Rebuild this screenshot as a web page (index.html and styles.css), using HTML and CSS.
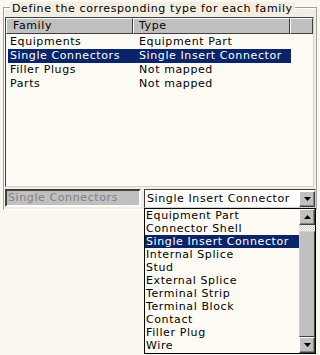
FILE: index.html
```html
<!DOCTYPE html>
<html>
<head>
<meta charset="utf-8">
<link rel="stylesheet" href="styles.css">
</head>
<body>
<div class="page">
  <div class="group">
    <div class="legend">Define the corresponding type for each family</div>
    <div class="listview">
      <div class="header">
        <div class="hcell c1">Family</div>
        <div class="hcell c2">Type</div>
        <div class="hcell c3"></div>
      </div>
      <div class="row"><span class="c1">Equipments</span><span class="c2">Equipment Part</span></div>
      <div class="row sel"><span class="c1">Single Connectors</span><span class="c2">Single Insert Connector</span></div>
      <div class="row"><span class="c1">Filler Plugs</span><span class="c2">Not mapped</span></div>
      <div class="row"><span class="c1">Parts</span><span class="c2">Not mapped</span></div>
    </div>
    <div class="editrow">
      <div class="field">Single Connectors</div>
      <div class="combo-wrap">
        <div class="combo">
          <div class="combo-text">Single Insert Connector</div>
          <div class="btn cbtn"><svg width="7" height="4" viewBox="0 0 7 4"><path d="M0 0h7L3.5 4z" fill="#000"/></svg></div>
        </div>
        <div class="popup">
          <div class="items">
            <div class="item">Equipment Part</div>
            <div class="item">Connector Shell</div>
            <div class="item isel">Single Insert Connector</div>
            <div class="item">Internal Splice</div>
            <div class="item">Stud</div>
            <div class="item">External Splice</div>
            <div class="item">Terminal Strip</div>
            <div class="item">Terminal Block</div>
            <div class="item">Contact</div>
            <div class="item">Filler Plug</div>
            <div class="item">Wire</div>
          </div>
          <div class="sbar">
            <div class="btn"><svg width="7" height="4" viewBox="0 0 7 4"><path d="M0 4h7L3.5 0z" fill="#000"/></svg></div>
            <div class="track"></div>
            <div class="thumb"></div>
            <div class="btn"><svg width="7" height="4" viewBox="0 0 7 4"><path d="M0 0h7L3.5 4z" fill="#000"/></svg></div>
          </div>
        </div>
      </div>
    </div>
  </div>
</div>
</body>
</html>
```

FILE: styles.css
```css
html, body {
  margin: 0;
  padding: 0;
  background: #fbf8f0;
}
body {
  width: 320px;
  height: 355px;
  overflow: hidden;
  font-family: "DejaVu Sans", Verdana, sans-serif;
  font-size: 11px;
  letter-spacing: 0.6px;
  white-space: nowrap;
  color: #000;
}
.page {
  width: 320px;
  height: 355px;
  padding-top: 7px;
  box-sizing: border-box;
}
.group {
  box-sizing: border-box;
  margin-left: 3px;
  width: 314px;
  height: 203px;
  padding: 0 2px 0 1px;
  border: 1px solid #a0a0a0;
  border-bottom-color: #fff;
  box-shadow: inset 1px 1px 0 #fff;
  background: #f3ede2;
}
.legend {
  width: max-content;
  margin: -6px 0 0 5px;
  padding: 0 2px;
  line-height: 13px;
  height: 13px;
  background: #f3ede2;
}
.listview {
  box-sizing: border-box;
  width: 309px;
  height: 170px;
  margin-top: 2px;
  border: 1px solid #404040;
  border-right-color: #d4d0c8;
  border-bottom-color: #d4d0c8;
  background: #fdfbf4;
}
.header {
  display: flex;
  height: 17px;
}
.hcell {
  box-sizing: border-box;
  height: 16px;
  background: #c0c0c0;
  border: 1px solid;
  border-color: #fff #404040 #404040 #fff;
  line-height: 14px;
}
.header .c1 { width: 127px; padding-left: 6px; }
.header .c2 { width: 157px; padding-left: 5px; }
.header .c3 { width: 23px; }
.row {
  display: flex;
  height: 14px;
  line-height: 14px;
  margin-left: 2px;
  width: 283px;
}
.row .c1 { width: 129px; padding-left: 2px; }
.row .c2 { flex: 1; }
.row.sel { background: #0a246a; color: #fff; }
.editrow {
  display: flex;
  gap: 3px;
  margin-top: 2px;
}
.field {
  box-sizing: border-box;
  flex: none;
  width: 136px;
  height: 18px;
  background: #c0c0c0;
  color: #808080;
  border: 2px solid;
  border-color: #404040 #fff #fff #404040;
  line-height: 14px;
  padding-left: 1px;
}
.combo-wrap {
  width: 172px;
  flex: none;
  position: relative;
}
.combo {
  box-sizing: border-box;
  height: 19px;
  display: flex;
  align-items: center;
  border: 1px solid #404040;
  border-right-color: #d4d0c8;
  border-bottom-color: #d4d0c8;
  background: #fff;
}
.combo-text {
  flex: 1;
  line-height: 17px;
  padding-left: 2px;
}
.btn {
  box-sizing: border-box;
  width: 16px;
  height: 16px;
  flex: none;
  background: #c0c0c0;
  border: 1px solid;
  border-color: #fff #404040 #404040 #fff;
  box-shadow: inset -1px -1px 0 #808080;
  display: flex;
  align-items: center;
  justify-content: center;
}
.popup {
  position: absolute;
  left: 0;
  top: 19px;
  width: 172px;
  box-sizing: border-box;
  height: 146px;
  border: 1px solid #000;
  background: #fdfbf4;
  display: flex;
}
.items { flex: 1; }
.item {
  height: 13px;
  line-height: 13px;
  padding-left: 1px;
}
.item.isel { background: #0a246a; color: #fff; }
.sbar {
  width: 16px;
  display: flex;
  flex-direction: column;
}
.track {
  height: 6px;
  background: repeating-conic-gradient(#fff 0 25%, #d4d0c8 0 50%) 0 0 / 2px 2px;
}
.thumb {
  flex: 1;
  box-sizing: border-box;
  background: #c0c0c0;
  border: 1px solid;
  border-color: #d4d0c8 #404040 #404040 #d4d0c8;
}
```
